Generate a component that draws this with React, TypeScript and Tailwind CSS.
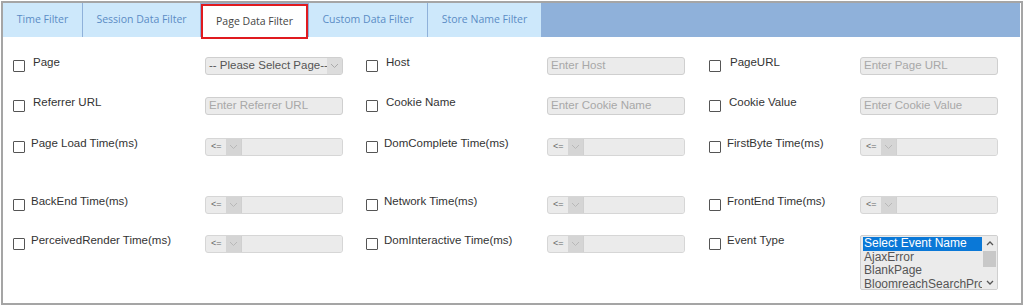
import React from "react";

const LBL = "font-['Liberation_Sans',Arial,sans-serif] text-[11.5px] leading-[13px] text-[#333] whitespace-nowrap";

function Check() {
  return <div className="mt-[3px] h-[12px] w-[12px] shrink-0 border border-[#555] bg-white rounded-[1px]" />;
}

function TextInput({ ph }: { ph: string }) {
  return (
    <div className="h-[18px] w-[138px] rounded-[3px] border border-[#cfcfcf] bg-[#ebebeb] px-[3px] flex items-center">
      <span className="font-['Liberation_Sans',Arial,sans-serif] text-[11.5px] text-[#a8a8a8] whitespace-nowrap">{ph}</span>
    </div>
  );
}

function Chevron({ color }: { color: string }) {
  return (
    <svg width="9" height="6" viewBox="0 0 9 6" fill="none">
      <path d="M1 1 L4.5 4.5 L8 1" stroke={color} strokeWidth="1" />
    </svg>
  );
}

function PageSelect() {
  return (
    <div className="h-[18px] w-[138px] rounded-[3px] border border-[#cfcfcf] bg-[#ebebeb] flex items-stretch overflow-hidden">
      <div className="flex-1 flex items-center pl-[3px] overflow-hidden">
        <span className="font-['Liberation_Sans',Arial,sans-serif] text-[11.5px] text-[#555] whitespace-nowrap">-- Please Select Page--</span>
      </div>
      <div className="w-[15px] bg-[#dcdcdc] flex items-center justify-center">
        <Chevron color="#aaa" />
      </div>
    </div>
  );
}

function TimeInput() {
  return (
    <div className="h-[18px] w-[138px] rounded-[3px] border border-[#d6d6d6] bg-[#ebebeb] flex items-stretch overflow-hidden">
      <div className="w-[20px] flex items-center pl-[5px]">
        <span className="font-['Liberation_Sans',Arial,sans-serif] text-[9px] text-[#666]">&lt;=</span>
      </div>
      <div className="w-[15px] bg-[#d5d5d5] flex items-center justify-center">
        <Chevron color="#b8b8b8" />
      </div>
      <div className="flex-1 border-l border-[#d0d0d0] bg-[#ebebeb]" />
    </div>
  );
}

function EventList() {
  return (
    <div className="h-[55px] w-[138px] rounded-[2px] border border-[#cfcfcf] bg-[#ebebeb] flex overflow-hidden">
      <div className="flex-1 overflow-hidden pt-[1px] pl-[2px] font-['Liberation_Sans',Arial,sans-serif] text-[12px] leading-[13.5px] text-[#555] whitespace-nowrap">
        <div className="bg-[#0a78d7] text-white pl-[1px]">Select Event Name</div>
        <div className="pl-[1px]">AjaxError</div>
        <div className="pl-[1px]">BlankPage</div>
        <div className="pl-[1px]">BloomreachSearchProvider</div>
      </div>
      <div className="w-[15px] flex flex-col items-center bg-[#ebebeb]">
        <div className="h-[15px] flex items-center justify-center">
          <svg width="8" height="5" viewBox="0 0 8 5" fill="none"><path d="M1 4 L4 1 L7 4" stroke="#555" strokeWidth="1.3" /></svg>
        </div>
        <div className="w-[13px] h-[16px] bg-[#c8c8c8]" />
        <div className="flex-1" />
        <div className="h-[14px] flex items-center justify-center">
          <svg width="8" height="5" viewBox="0 0 8 5" fill="none"><path d="M1 1 L4 4 L7 1" stroke="#555" strokeWidth="1.3" /></svg>
        </div>
      </div>
    </div>
  );
}

function Cell({ label, labelW, gap, children }: { label: string; labelW: string; gap: string; children: React.ReactNode }) {
  return (
    <div className="flex items-start">
      <div className={"flex items-start shrink-0 " + labelW}>
        <Check />
        <span className={LBL + " mt-[-1px] " + gap}>{label}</span>
      </div>
      {children}
    </div>
  );
}

const C1 = "w-[353px]";
const C2 = "w-[343px]";

export default function App() {
  const tabs = [
    { t: "Time Filter", w: "w-[79px]" },
    { t: "Session Data Filter", w: "w-[117px]" },
  ];
  const tabs2 = [
    { t: "Custom Data Filter", w: "w-[118px]" },
    { t: "Store Name Filter", w: "w-[113px]" },
  ];
  const tabCls = "h-full bg-[#cde8fb] flex items-center justify-center font-['Open_Sans',sans-serif] text-[10.5px] text-[#5b8cc5] whitespace-nowrap";
  return (
    <div className="w-[1024px] h-[307px] bg-white">
      <div className="ml-[1px] mt-[1px] w-[1022px] h-[304px] border-2 border-t-[2px] border-[#a5a5a5] bg-white flex flex-col">
        <div className="h-[34px] mr-[1px] bg-[#8fb1da] flex gap-px">
          {tabs.map((x) => (
            <div key={x.t} className={tabCls + " " + x.w}>{x.t}</div>
          ))}
          <div className="w-[107px] h-[35px] mt-[1px] bg-white border-2 border-[#e01a1f] flex items-center justify-center font-['Open_Sans',sans-serif] text-[10.5px] text-[#444] whitespace-nowrap">
            Page Data Filter
          </div>
          {tabs2.map((x) => (
            <div key={x.t} className={tabCls + " " + x.w}>{x.t}</div>
          ))}
        </div>
        <div className="pl-[10px] pt-[20px] flex flex-col">
          <div className="flex h-[40px]">
            <div className={C1}><Cell label="Page" labelW="w-[192px]" gap="ml-[8px]"><PageSelect /></Cell></div>
            <div className={C2}><Cell label="Host" labelW="w-[181px]" gap="ml-[8px]"><TextInput ph="Enter Host" /></Cell></div>
            <div><Cell label="PageURL" labelW="w-[151px]" gap="ml-[9px]"><TextInput ph="Enter Page URL" /></Cell></div>
          </div>
          <div className="flex h-[41px]">
            <div className={C1}><Cell label="Referrer URL" labelW="w-[192px]" gap="ml-[8px]"><TextInput ph="Enter Referrer URL" /></Cell></div>
            <div className={C2}><Cell label="Cookie Name" labelW="w-[181px]" gap="ml-[8px]"><TextInput ph="Enter Cookie Name" /></Cell></div>
            <div><Cell label="Cookie Value" labelW="w-[151px]" gap="ml-[8px]"><TextInput ph="Enter Cookie Value" /></Cell></div>
          </div>
          <div className="flex h-[58px]">
            <div className={C1}><Cell label="Page Load Time(ms)" labelW="w-[192px]" gap="ml-[6px]"><TimeInput /></Cell></div>
            <div className={C2}><Cell label="DomComplete Time(ms)" labelW="w-[181px]" gap="ml-[6px]"><TimeInput /></Cell></div>
            <div><Cell label="FirstByte Time(ms)" labelW="w-[151px]" gap="ml-[6px]"><TimeInput /></Cell></div>
          </div>
          <div className="flex h-[39px]">
            <div className={C1}><Cell label="BackEnd Time(ms)" labelW="w-[192px]" gap="ml-[6px]"><TimeInput /></Cell></div>
            <div className={C2}><Cell label="Network Time(ms)" labelW="w-[181px]" gap="ml-[6px]"><TimeInput /></Cell></div>
            <div><Cell label="FrontEnd Time(ms)" labelW="w-[151px]" gap="ml-[6px]"><TimeInput /></Cell></div>
          </div>
          <div className="flex">
            <div className={C1}><Cell label="PerceivedRender Time(ms)" labelW="w-[192px]" gap="ml-[6px]"><TimeInput /></Cell></div>
            <div className={C2}><Cell label="DomInteractive Time(ms)" labelW="w-[181px]" gap="ml-[6px]"><TimeInput /></Cell></div>
            <div><Cell label="Event Type" labelW="w-[151px]" gap="ml-[6px]"><EventList /></Cell></div>
          </div>
        </div>
      </div>
    </div>
  );
}
